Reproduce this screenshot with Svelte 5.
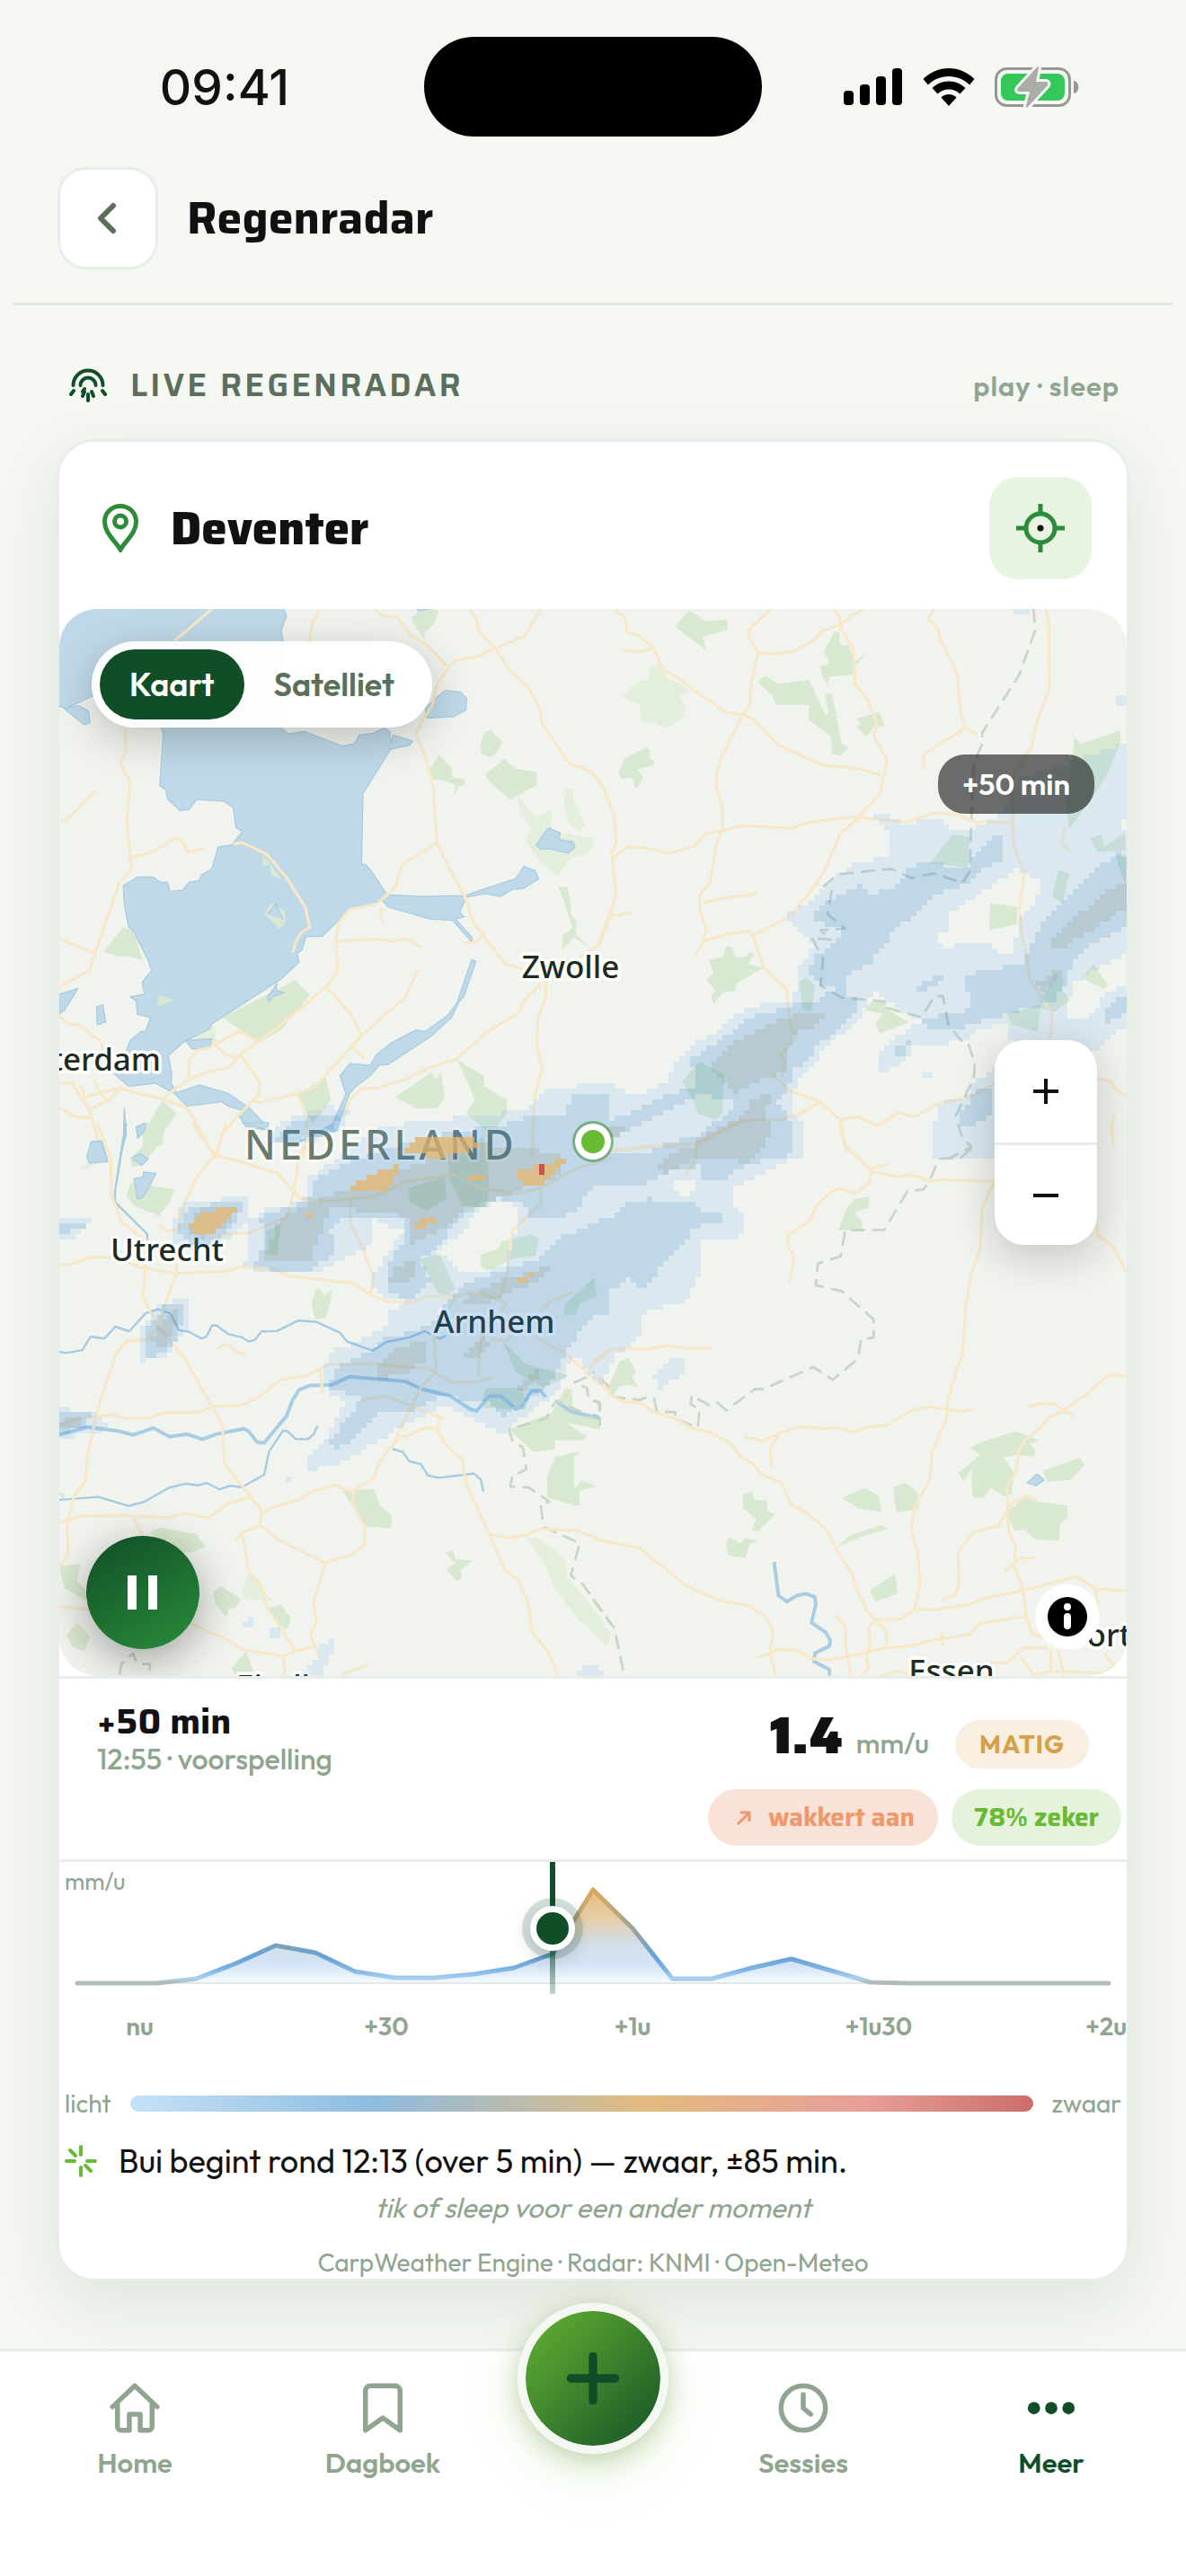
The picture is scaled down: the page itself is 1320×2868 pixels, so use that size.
<script lang="ts">
	type Tile = 'nw' | 'ne' | 'sw' | 'se';

	// Each map tile has its own drawing units: [x, y, scale x, scale y] on the 1188 unit map
	const tiles: Record<Tile, [number, number, number, number]> = {
		nw: [-6, -8, 0.3954, 0.3954],
		ne: [594, -8, 0.3954, 0.3954],
		sw: [-6, 572, 0.3954, 0.4018],
		se: [594, 572, 0.3954, 0.4018]
	};
	const tileTransform = (t: Tile) =>
		`translate(${tiles[t][0]} ${tiles[t][1]}) scale(${tiles[t][2]} ${tiles[t][3]})`;

	const water: Record<Tile, string> = {
		nw: 'M0 0H640L655 40 640 80 645 110 640 355 660 372 705 365 812 406 845 400 860 375 900 370 928 355 945 365 948 395 955 375 1010 392 1003 403 948 415 870 540 866 738 880 742 895 760 938 825 1040 830 1158 827 1222 805 1300 780 1323 745 1355 757 1365 780 1320 808 1290 810 1257 830 1215 822 1160 832 1142 875 1155 887 1130 893 1177 945 1176 957 1122 897 1058 893 942 860 925 842 832 867 755 942 710 943 698 980 685 990 690 1015 640 1062 443 1190 440 1202 365 1240 322 1278 332 1330 330 1355 345 1382 410 1360 435 1368 490 1384 550 1425 612 1490 540 1478 520 1445 532 1432 490 1420 468 1405 462 1410 375 1420 340 1385 287 1356 210 1364 170 1330 205 1260 215 1235 245 1210 258 1210 272 1170 235 1162 232 1125 215 1112 255 1105 248 1072 275 1038 265 1010 225 930 210 915 198 850 195 800 235 775 280 775 300 790 320 790 327 815 362 812 380 790 408 785 417 768 445 752 462 690 500 685 530 647 512 635 505 580 480 562 402 557 380 585 355 588 320 555 315 530 298 518 308 370 300 350 110 265 35 300 0 290zM30 302L68 292 97 307 102 340 85 346zM1045 300L1085 262 1100 250 1145 254 1162 272 1160 305 1125 323 1050 328zM1357 685L1392 637 1425 650 1422 670 1460 675 1467 690 1447 708 1395 695 1370 697zM1176 1008L1188 1012 1155 1110 1138 1130 1120 1170 1060 1225 940 1303 915 1305 890 1335 850 1365 832 1385 795 1490 690 1520 785 1470 822 1385 805 1335 833 1300 890 1305 908 1275 950 1242 1018 1206 1045 1210 1108 1165 1135 1128 1158 1060zM15 1105L68 1088 55 1110 30 1150 15 1160zM120 1140L138 1135 146 1183 122 1192zM370 1235L445 1230 440 1255 390 1260zM232 1478L255 1470 258 1490 235 1510zM105 1520L135 1518 150 1568H95zM198 1425L204 1500 185 1568 196 1500zM1022 20H1070L1038 57z',
		ne: '',
		sw: 'M105 52L130 50 152 108 100 112 92 95zM220 98L242 85 266 100 248 118zM225 155L250 150 252 137 287 140 270 175 250 207 235 212 230 180zM232 15L255 0 258 18 238 42zM530 0L600 20 605 0z',
		se: 'M1222 998L1250 973 1270 990 1247 1006z'
	};

	const rivers: Record<Tile, string> = {
		nw: '',
		ne: '',
		sw: 'M203 0L172 190 172 220 262 308 264 325M15 635L35 638 80 630 103 593 142 598 173 565 212 578 258 528 292 517 328 528 352 575 382 580 415 598 430 592 445 562 458 562 490 585 530 595 548 606 565 602 585 578 628 577 688 548 740 552 805 582 825 606 898 632 935 608 1000 595 1045 578 1085 598 1105 590M15 1045L125 1037 210 1062 255 1050 325 1011 370 1000 405 1005 430 998 466 1016 495 1006 530 1010 592 975 605 912 645 853 658 855 680 876 715 877 732 862 742 840M953 904L982 912 1000 938 1033 946 1053 977 1082 984 1182 972 1201 988 1209 1022',
		se: ''
	};

	const wideRivers: Record<Tile, string> = {
		nw: '',
		ne: '',
		sw: 'M15 865L95 843 180 854 222 865 280 846 325 870 375 863 418 877 460 862 535 848 548 855 572 885 592 887 655 812 672 768 690 740 720 728 780 727 832 704 990 717 1035 738 1115 757 1172 794 1190 799 1225 757 1260 758 1300 794 1318 787 1345 742 1370 743 1385 760M1418 775L1455 800 1535 818',
		se: 'M510 1217L522 1310 545 1327 575 1310 600 1305 625 1315 627 1335 615 1385 655 1412 668 1435 665 1450 625 1470 622 1493 665 1515 666 1532M0 810L18 818'
	};

	const woods: Record<Tile, string> = {
		nw: 'M1005 45L1025 30 1070 20 1085 25 1068 65 1045 85 1040 103 1015 65zM1200 405L1210 370 1230 360 1262 395 1250 420 1230 438 1203 428zM1060 470L1083 428 1120 470 1122 495 1157 500 1157 515 1140 520 1127 543 1130 515 1095 502 1065 500zM1213 488L1268 442 1300 470 1358 480 1360 515 1285 557 1240 520zM140 985L195 915 225 930 250 1010 205 997 180 998zM588 710L640 780 612 770 608 740 588 745zM475 1170L680 1065 720 1108 640 1205 580 1240 525 1205zM290 1142L297 1107 338 1122zM688 1385L765 1340 780 1400 745 1450 725 1470zM960 1395L1062 1325 1075 1345 1090 1325 1100 1395 1080 1425 1020 1425zM1135 1290L1210 1335 1212 1365 1275 1402 1275 1440 1230 1500 1160 1440 1185 1400zM1420 803L1445 803 1455 850 1455 880 1472 900 1468 935 1510 975 1465 945 1430 978 1432 940 1460 920 1440 855zM250 1500L305 1405 345 1440 310 1490 305 1530 250 1540zM592 880L610 850 650 870 650 910 635 920z',
		ne: 'M230 70L270 25 320 55 378 50 380 78 310 98 318 135 270 100zM650 140L680 83 693 88 695 120 720 125 735 170 768 145 750 170 730 185 730 205 665 212 660 235 645 210 640 182 665 175zM463 225L485 208 520 230 608 220 655 320 663 310 652 260 673 258 700 400 720 412 695 433 672 428 670 380 605 330 610 290 515 290 505 265zM740 330L805 310 823 350 795 350 768 380 742 350 755 345zM72 478L90 440 150 410 160 420 158 438 172 450 170 462 125 470 142 495 122 528 110 495 80 500zM325 1010L365 1000 375 970 390 972 400 1000 430 1000 440 985 455 995 435 1020 480 1030 405 1075 400 1095 365 1100 340 1135 332 1110 345 1095 320 1065 340 1045zM1352 420L1355 378 1370 400 1485 362 1485 395 1450 480 1410 545 1340 640 1330 560zM950 735L985 690 1010 655 1060 662 1055 750zM1118 850L1195 858 1192 908 1115 925zM1292 830L1310 755 1340 765 1322 850zM1400 665L1430 655 1440 690 1497 650 1500 700 1420 705zM580 1070L600 1058 625 1080 615 1155 590 1150zM765 1150L790 1120 822 1122 825 1145 888 1185 808 1215 795 1190 815 1160zM250 1350L300 1295 368 1330 365 1440 345 1460 295 1440 280 1400zM1375 1060L1410 1020 1450 1080 1440 1090zM1165 1160L1255 1135 1300 1045 1325 1060 1320 1095 1345 1120 1300 1155 1260 1145 1250 1210 1180 1190zM1470 715L1500 710V800z',
		sw: 'M255 0H300L305 50 245 120 220 122 215 100 250 65zM203 200L218 165 340 185 328 220 295 258 225 230zM598 300L640 280 628 368 598 365zM725 498L742 455 760 480 782 465 778 500 765 540 735 545zM1000 180L1100 150 1105 210 1050 245 1000 220zM1105 60L1210 40 1225 150 1220 235 1150 230 1115 160zM1030 378L1085 362 1130 460 1110 480 1080 470zM1200 395L1202 365 1250 350 1260 330 1345 310 1365 320 1355 370 1300 375 1220 410zM1440 500L1520 430 1530 480 1480 500 1470 530 1435 535zM1262 605L1300 640 1330 670 1450 700 1380 735 1300 690zM1200 790L1215 735 1320 735 1330 795zM1280 850L1330 830 1400 805 1440 735 1458 740 1460 800 1540 820 1535 850 1440 830 1500 870 1490 880 1410 880 1410 905 1350 912 1320 885zM1388 980L1412 925 1485 910 1465 925 1465 1015 1485 990 1528 1008 1480 1020 1480 1060 1465 1060 1388 1038zM812 1020L900 1015 918 1060 952 1090 948 1125 880 1118 845 1070zM1100 1190L1125 1185 1130 1210 1180 1212 1145 1240 1148 1262 1132 1270 1105 1238 1130 1220zM270 1135L300 1122 400 1140 428 1175 385 1190 330 1190zM448 1300L470 1285 528 1320 510 1345 492 1345 485 1370 455 1335zM600 1345L640 1335 668 1375 655 1405 620 1380zM35 1420L65 1385 103 1425 85 1465 50 1450zM500 1510L540 1465 568 1532H510zM15 1230L75 1222 65 1270 95 1300 90 1325 30 1290zM15 1025L32 1030 25 1045z',
		se: 'M38 745L75 660 100 652 122 690 110 705 128 735 98 725 70 735 58 755zM715 235L740 210 780 205 775 235 735 250 758 275 755 300 690 297zM422 1030L450 1022 455 1045 490 1045 490 1075 512 1085 465 1132 445 1130 460 1100 422 1065zM375 1165L385 1148 415 1165 430 1150 462 1158 440 1170 430 1205 380 1200zM700 1040L765 1012 805 1035 812 1078 750 1070zM845 1010L880 998 912 1022 918 1070 855 1080 848 1045zM688 1175L720 1145 810 1115 833 1125 760 1145zM780 1295L850 1250 858 1305 795 1328zM1062 900L1100 882 1190 855 1258 880 1230 890 1248 910 1240 925 1195 920 1155 928 1185 970 1178 1030 1155 1035 1120 1010 1100 1040 1068 1038 1065 960 1045 995 1028 970 1090 920zM1265 965L1370 928 1383 948 1345 990 1280 995zM1165 1080L1222 1030 1250 1050 1335 1060 1335 1095 1315 1110 1312 1158 1245 1155 1215 1128 1185 1130zM0 820L22 825 20 848 0 845z'
	};

	const heath: Record<Tile, string> = {
		nw: 'M1305 545L1355 605 1403 585 1400 645 1515 665 1520 685 1500 710 1455 720 1418 772 1370 735 1325 670 1345 640 1310 590zM1442 525L1462 530 1465 560 1495 630 1480 648 1450 625 1435 560zM380 1240L450 1195 460 1240 420 1240z',
		ne: 'M80 265L135 220 155 220 158 185 188 175 210 215 245 230 272 250 245 265 262 300 250 330 210 355 165 340 135 340 130 290z',
		sw: 'M68 135L92 108 130 112zM528 1300L545 1250 580 1265 590 1300 620 1325 540 1320zM1330 1150L1365 1150 1440 1210 1445 1260 1480 1300 1550 1385 1560 1450 1470 1370 1410 1290 1380 1220z',
		se: 'M0 1375L40 1400 50 1420 38 1450 0 1415z'
	};

	const roads: Record<Tile, string> = {
		nw: 'M340 110L445 20M748 20L728 60 715 130M903 20L925 40 965 42 1005 95 1050 122 1110 185 1080 230 1065 290 1018 370 1045 435 1068 520 1078 680 1130 785 1155 825 1180 902 1270 1020 1320 1035M1170 20L1190 50 1195 80 1243 130 1280 190 1335 240 1370 308 1372 340 1450 455 1510 478 1535 500 1568 580M1370 20L1325 97 1243 130 1190 155 1130 165 1110 185M200 355L203 420 187 455 215 508 205 615 218 755 185 790 115 990 100 1038 15 1085M120 532L98 550 45 608 20 618M220 718L265 710 345 665 362 675 378 707 425 693M505 682L530 678 598 710 650 770 708 860 720 917 695 932 680 960 672 988M15 948L115 990M1080 678L980 740 960 805 910 850 832 867 800 905 795 940 798 1040 765 1085 640 1190 525 1275M800 955L910 950 960 955 990 948 1035 973M918 860L925 900M765 1085L800 1120 835 1160 865 1222 840 1255 875 1285M1025 1035L988 1115 865 1222 733 1368 685 1385 580 1410 560 1405M1155 960H1180L1210 940M1568 870L1530 970 1480 1000M1385 1070L1385 1115 1362 1170 1360 1260 1375 1310 1352 1400 1345 1568M1370 1075L1325 1120 1310 1155 1215 1215 1130 1290 1060 1310 990 1345 910 1370 865 1370 835 1400 815 1450M15 1165L40 1190 65 1190 130 1235 170 1330M525 1275L580 1355 575 1390 515 1450 475 1500 455 1568M525 1275L495 1310 430 1325 380 1345 305 1400 180 1370 70 1400M380 1345V1290L405 1262 440 1255 520 1210 580 1240M445 1235L480 1275 515 1285M15 1355H50L100 1430 140 1568M75 1360L90 1400M110 1345L150 1410M100 1430L160 1400 190 1365M15 1425L60 1450 110 1455M305 1400L375 1425 430 1520 455 1568M685 1385L705 1430 715 1500 700 1568',
		ne: 'M60 20L90 45 97 88 125 92 170 130 195 190 240 215 270 240 345 290 365 308 420 318 450 330 520 402 590 435 648 460 748 470 810 488M80 137L135 140 170 130M500 20L440 78 438 100 465 142 445 230 442 290 420 320 360 440 347 490 348 525 365 585 365 640 345 690 330 790 300 825V865L318 920 310 960 285 998M465 142L500 147 565 140 625 105 640 85 700 62 730 38 765 20M678 20L693 40 700 80 732 130 738 232 775 278 800 350 790 375 827 445 808 540 745 610 695 655 655 750 625 800 555 885 450 940 480 1030 545 1090 555 1190 570 1225 530 1275 540 1300 530 1340M0 485L30 525 60 600 65 680 52 705 65 820 50 885 15 970M52 725L95 690 150 693 210 708 280 690 320 652 365 645 420 630 560 638 610 620 740 605 880 620 960 595 1030 600 1075 620 1185 622M50 885L115 873M310 848L375 833 450 825 460 818M310 955L380 935 440 928 450 940M960 20L943 50 968 70 980 110 1025 200 1035 315 1048 355 930 430V468M1048 355L1082 373M1275 20L1283 60 1285 245 1247 345 1235 405 1185 490 1180 570 1185 690 1215 765 1200 860 1205 930 1220 990 1230 1065 1290 1155 1292 1195 1283 1235M1330 635L1318 680 1343 705M505 1330L550 1375 640 1408 695 1458 710 1530 745 1568M290 1525L420 1460 530 1458 585 1440 640 1408M695 1458L745 1450 800 1475 860 1438 905 1450 975 1412 1060 1395 1130 1358M0 1552L130 1535 290 1525V1565M1420 1343L1455 1350 1475 1375 1502 1392M1467 1437L1460 1480 1465 1532M1130 1355L1180 1350',
		sw: 'M122 0L160 100 162 200 190 275 250 320 258 400 250 480 290 560 370 655 475 840 480 945 585 1075 580 1115 630 1155 765 1220 730 1330 740 1385 720 1415 745 1475M295 285L325 300 350 295 365 230 405 145 455 90 415 40 390 0M485 0L455 90 525 108 630 140 675 192 695 210 770 218 905 203 985 165 1125 143 1200 180 1305 198 1370 180 1475 125 1568 100M675 192L690 100 705 60M675 192L655 260 610 280 550 305 480 310 440 325M835 215V280L870 350 900 425 890 475 935 495 1010 498 1050 480 1130 480 1190 468 1275 500M1370 180L1372 225 1290 300 1275 420 1255 490M15 393H50L100 373 170 373 240 400 345 418 480 412 530 400 620 405 660 425 845 445 890 475M345 390L345 420 310 510 295 560 265 600 205 605 175 640 125 790 95 920 90 990 55 1040 38 1110 40 1195 15 1235M15 835L70 820 165 808 200 820 270 818 310 803 405 803 445 787 525 783 570 765 640 712 715 700 770 670 895 668 1055 682 1120 720 1185 718 1235 705M750 685L757 755M458 625L485 613 525 640 540 640M1135 475L1070 580 1075 690 1035 730 1010 780 970 855 965 880 915 940 900 985 840 1020 790 1005 730 1020 690 1045 605 1068 585 1085M860 770L935 758 1010 785 1095 820M1085 820L1078 850 1105 895 1150 935 1160 1000 1225 1140 1270 1240 1305 1265 1335 1330 1345 1410 1390 1465 1420 1532M968 868L990 870 1045 845 1078 850M15 1110L70 1090 200 1088 320 1095 370 1082 435 1095 490 1055 555 1038M225 1095L250 1145M585 1115L530 1135 510 1160M530 1140L548 1240 590 1295 595 1335 680 1465 735 1450 745 1475M845 1020L840 1055 875 1120 875 1170 840 1195 765 1220M380 1385L480 1430 540 1462 645 1478 680 1465M645 1478L650 1532M810 1530L885 1500M1225 1140L1275 1150 1330 1142 1370 1125 1470 1130 1568 1165M1275 500L1200 610 1195 700M1355 595L1440 640 1568 750M1505 680L1568 630M1460 470L1400 495 1365 520M1230 600L1270 605 1290 590M15 1340L100 1350',
		se: 'M0 85L160 68 290 60 410 0M290 60V100L258 145M695 0L710 70 750 100 785 135 860 150 895 143 950 163 985 158 1130 162 1095 240 1090 350 1065 420 1048 520 1040 640 1022 690 1000 765 995 820 955 910 948 990 905 1065 895 1125 915 1200 920 1285 905 1345M785 130L800 120 830 115M785 135L775 170 740 195 690 182 665 195 630 230 608 275 550 310 547 335 567 373 555 440M1420 280V310L1470 350 1480 375 1502 415M0 660L45 630 90 625 150 628 210 617 260 625 335 625M15 705L50 755 85 772 138 778 170 800 230 820 280 847 330 858 390 890 415 925 450 945 475 975 530 998 560 1060 600 1080 655 1125 690 1190 730 1250 740 1290 770 1350 795 1378M425 870L480 882 525 860 585 842 640 848 690 845 735 857 765 845 830 838 895 797 945 787 1040 800 1073 793M525 860L498 905 503 955M1225 788L1260 778 1300 780 1325 797 1355 815M1502 702L1455 697 1385 755 1325 797 1280 820 1255 850 1215 880 1198 910 1190 975 1165 1005 1167 1075 1140 1118 1075 1132 1028 1187 1030 1280 1020 1307 982 1323M1165 1075L1185 1050 1220 1038 1250 1043M1165 1080L1172 1135 1190 1175 1185 1230 1208 1280 1220 1370 1235 1415 1290 1435M1158 1245L1200 1208 1245 1205M0 1153L130 1178 265 1285 360 1325 435 1337 485 1367 508 1412 497 1470 515 1532M465 1483L520 1460 575 1462 610 1485 670 1488 760 1470 820 1455 895 1450 940 1437 1060 1418 1085 1388 1220 1367M682 1365L708 1395 712 1450 725 1532M795 1378L775 1400 782 1440 770 1480 775 1510 755 1532M795 1378L825 1410 828 1445M795 1378L870 1375 905 1345 950 1350 1060 1335 1100 1318 1240 1290 1360 1257 1415 1292 1502 1297M1415 1292L1425 1370M980 1412L985 1450M810 1532L855 1520 900 1532M1120 1497L1165 1497 1210 1455 1280 1455M1205 1480L1240 1530 1290 1520 1288 1460M1310 1460L1325 1532M1440 1470L1465 1505 1440 1525 1300 1520'
	};

	const borders: Record<Tile, string> = {
		nw: '',
		ne: 'M1240 20L1245 80 1200 205 1095 370 1098 395 1078 440 1070 480 1060 760 1040 792 960 765 895 778 840 752 690 767 650 800 672 815 660 880 710 920 640 925 670 952 615 945 648 1005 640 1080 700 1115 820 1125 815 1140 925 1170 960 1112 985 1110 1000 1190 1040 1240 1055 1240 1075 1300 1072 1340 1020 1450 1040 1510 1065 1535 1000 1568',
		sw: 'M1568 735L1525 700M1500 705L1465 720 1500 735 1505 760 1538 780 1535 825 1415 770 1400 790 1385 820 1280 850 1290 880 1320 900 1330 960 1290 980 1285 1008 1335 1010 1395 1050 1370 1055 1378 1120 1480 1165 1455 1255 1490 1280 1568 1390M185 1530L190 1500 222 1470 235 1500 270 1500 270 1520',
		se: 'M1065 72L1035 97 975 100 945 165 930 185 885 190 820 297 710 298 697 370 633 390 627 450 700 467 790 545 790 595 755 600 745 655 675 712 620 677 480 738 455 738 375 797 350 775 325 782 278 755 275 780 300 795 295 845 230 820 232 802 180 800 172 765 150 762 130 768 60 760 0 690M0 770L18 775 20 840M0 1320L60 1400 88 1532'
	};

	// Radar cells per intensity: 0 dry, 1 light, 2 moderate, 3 firm, 4 heavy, 5 extreme.
	// Later shapes overwrite earlier ones.
	const rain: [number, Tile, string][] = [
		[1, 'nw', '1568,1355 1480,1370 1400,1370 1350,1400 1330,1430 1250,1440 1130,1450 1080,1490 990,1500 900,1568 1568,1568'],
		[1, 'nw', '600,1500 650,1460 770,1420 830,1440 800,1490 700,1530'],
		[1, 'ne', '-50,1355 50,1350 110,1395 215,1350 220,1320 245,1280 300,1235 365,1200 400,1160 465,1135 560,1135 580,1060 570,1040 600,1000 620,960 590,935 555,905 540,880 600,850 650,800 700,760 740,735 835,715 840,670 825,630 790,605 790,590 830,600 870,625 980,610 1010,640 1060,640 1150,600 1160,570 1200,500 1290,470 1400,430 1510,395 1510,610 1470,630 1510,650 1510,990 1440,1020 1400,1040 1350,1080 1330,1160 1350,1180 1390,1180 1420,1140 1440,1100 1510,1080 1510,1190 1450,1230 1420,1265 1200,1280 1175,1230 1170,1190 1100,1200 1050,1230 980,1245 900,1245 890,1280 830,1325 800,1315 805,1270 850,1230 890,1205 920,1180 880,1160 820,1120 800,1100 770,1130 760,1160 720,1200 660,1250 590,1340 555,1380 555,1430 595,1470 585,1568 -50,1568'],
		[1, 'ne', '955,1568 955,1480 980,1410 1040,1400 1080,1350 1130,1310 1200,1310 1200,1568'],
		[1, 'ne', '1465,265 1510,260 1510,305 1465,290'],
		[1, 'ne', '1190,15 1225,15 1225,36 1190,30'],
		[1, 'ne', '930,1320 960,1325 960,1340 930,1340'],
		[1, 'se', '-50,0 595,0 595,50 560,100 480,140 440,160 400,180 395,220 430,270 430,300 400,330 300,325 305,400 285,450 265,495 220,500 140,530 140,590 70,640 40,700 20,730 -50,640'],
		[1, 'se', '170,695 210,655 260,655 250,695 190,740 175,720'],
		[1, 'se', '955,0 1130,0 1130,70 1000,80 955,85'],
		[1, 'se', '-30,1510 20,1510 40,1540 -30,1540'],
		[1, 'sw', '1568,600 1500,620 1450,660 1440,690 1420,740 1330,810 1260,860 1200,830 1130,795 1080,790 1000,830 920,880 850,920 790,950 710,965 720,920 760,880 790,830 820,780 770,740 750,680 790,630 850,610 930,570 950,520 1000,490 920,480 890,440 900,420 950,350 980,300 900,270 900,330 860,355 820,380 720,420 620,420 530,400 550,360 550,270 600,240 700,220 720,150 800,100 850,60 900,20 1000,0 1568,0'],
		[1, 'sw', '600,50 640,0 810,0 750,40 650,60'],
		[1, 'sw', '340,260 370,220 545,205 540,270 500,320 400,350 340,340'],
		[1, 'sw', '0,270 115,265 60,320 0,325'],
		[1, 'sw', '0,790 105,800 160,850 60,870 0,890'],
		[1, 'sw', '250,560 300,500 385,490 380,560 340,610 330,640 250,660'],
		[1, 'sw', '690,1540 740,1490 745,1440 785,1435 780,1490 740,1540'],
		[1, 'sw', '600,1405 640,1400 635,1432 600,1432'],
		[1, 'sw', '535,1380 565,1365 560,1400 538,1405'],
		[1, 'sw', '1455,1540 1490,1510 1530,1515 1530,1540'],
		[1, 'sw', '655,975 675,975 675,990 655,990'],
		[0, 'ne', '1000,880 1080,830 1190,755 1265,790 1240,850 1200,900 1190,960 1180,1000 1150,990 1120,960 1050,960 980,975 975,935 1000,925'],
		[0, 'se', '230,155 280,160 285,185 260,205 235,190'],
		[0, 'sw', '1080,360 1150,300 1200,240 1240,215 1300,230 1310,290 1290,330 1270,400 1210,410 1150,415 1120,390'],
		[2, 'nw', '1568,1385 1480,1400 1440,1430 1450,1450 1330,1450 1250,1480 1120,1490 1000,1540 1000,1568 1330,1568 1400,1530 1480,1500 1568,1480'],
		[2, 'nw', '620,1510 670,1460 800,1440 790,1490 650,1530'],
		[2, 'ne', '-60,1385 50,1385 20,1430 -60,1450'],
		[2, 'ne', '270,1290 330,1250 390,1210 430,1170 520,1150 580,1130 640,1120 680,1090 640,1075 610,1040 620,1000 650,990 690,950 700,920 630,900 620,880 680,830 750,800 780,820 850,810 890,750 930,725 1000,745 1060,750 1080,700 1130,665 1155,665 1155,720 1100,755 1060,790 1000,810 940,840 910,880 850,920 810,980 780,1020 740,1040 710,1060 710,1120 740,1120 735,1160 700,1200 640,1240 600,1300 560,1320 550,1370 510,1410 550,1450 565,1500 550,1568 100,1568 200,1530 300,1500 380,1440 400,1400 300,1390 200,1440 100,1490 0,1520 0,1480 100,1440 200,1390 280,1370 290,1320'],
		[2, 'ne', '1050,1060 1090,1040 1210,1020 1220,990 1245,940 1265,900 1310,860 1360,810 1430,740 1480,710 1510,720 1510,910 1440,950 1380,980 1350,1020 1330,1080 1290,1130 1200,1150 1100,1180 1030,1205 940,1200 930,1175 1050,1150 1070,1110 1045,1095'],
		[2, 'ne', '910,1080 980,1050 980,1070 920,1100'],
		[2, 'ne', '840,1250 890,1240 880,1275 850,1280'],
		[2, 'ne', '1435,1160 1480,1110 1510,1105 1510,1150 1450,1185'],
		[2, 'ne', '1030,1440 1080,1380 1130,1360 1130,1440 1080,1470 1030,1480'],
		[2, 'se', '-50,110 60,90 180,90 200,60 280,40 400,0 560,0 560,40 500,80 470,110 400,130 370,165 310,160 300,120 200,140 130,175 -50,175'],
		[2, 'se', '-50,300 50,260 80,230 150,210 280,220 290,240 365,250 360,275 280,290 270,320 200,380 170,440 140,465 100,430 20,490 0,550 -50,570'],
		[2, 'sw', '560,390 600,330 580,260 640,240 720,210 740,150 830,110 950,70 1000,50 1200,20 1340,20 1450,40 1568,80 1568,160 1500,190 1480,240 1440,260 1350,270 1310,215 1240,210 1180,240 1120,290 1080,350 1030,380 1060,440 1000,490 940,470 940,400 980,330 985,260 900,260 820,260 780,300 790,360 720,410 620,410'],
		[2, 'sw', '780,720 790,680 880,640 930,600 1010,580 1060,560 1120,480 1150,450 1260,410 1380,370 1430,310 1568,290 1568,520 1500,550 1440,640 1400,720 1330,770 1260,820 1230,770 1150,770 1100,750 1000,800 920,800 850,870 790,910 780,880 830,810 870,760 780,740'],
		[2, 'sw', '350,300 380,230 530,220 520,270 460,320 400,345'],
		[2, 'sw', '0,280 95,285 40,305 0,305'],
		[2, 'sw', '0,795 100,800 95,840 0,870'],
		[2, 'sw', '265,560 310,510 370,505 345,600 310,640 250,650'],
		[3, 'ne', '340,1290 400,1240 470,1200 560,1165 650,1155 640,1190 570,1215 550,1260 540,1320 470,1350 400,1385 370,1350 340,1320'],
		[3, 'ne', '450,1400 510,1370 490,1420 495,1500 450,1568 250,1568 300,1510 420,1450'],
		[3, 'ne', '1300,940 1380,870 1440,820 1510,785 1510,860 1440,900 1380,940 1330,970 1290,970'],
		[3, 'ne', '1245,1080 1300,1035 1320,1050 1270,1100'],
		[3, 'ne', '20,1490 60,1472 100,1470 90,1490 50,1515'],
		[3, 'se', '390,20 500,0 490,50 430,120 390,100 370,60'],
		[3, 'se', '170,130 220,90 290,60 360,50 300,90 200,140'],
		[3, 'sw', '590,380 640,260 720,220 850,180 1000,120 1200,60 1400,80 1450,100 1400,160 1330,180 1230,220 1150,240 1100,290 1000,340 1010,260 900,250 780,230 740,330 720,390'],
		[3, 'sw', '910,670 960,620 1050,610 1055,650 1000,690 910,710'],
		[3, 'sw', '1140,500 1240,440 1330,420 1410,380 1380,430 1260,480 1200,510'],
		[3, 'sw', '940,440 960,400 1010,380 1020,410 980,450'],
		[3, 'sw', '1160,640 1210,580 1225,610 1200,650 1160,655'],
		[3, 'sw', '1295,740 1360,680 1370,705 1330,745'],
		[3, 'sw', '375,290 410,240 520,230 490,280 440,315 390,320'],
		[3, 'sw', '0,830 80,810 70,840 0,860'],
		[3, 'sw', '275,610 300,560 340,515 345,550 310,620'],
		[4, 'sw', '375,290 420,245 515,235 500,260 460,300 400,310'],
		[4, 'sw', '830,180 880,150 965,120 965,145 940,185 850,190'],
		[4, 'sw', '990,80 1020,45 1080,40 1200,48 1200,70 1120,90 1060,105 1050,85'],
		[4, 'sw', '1160,165 1165,140 1210,145 1205,165'],
		[4, 'sw', '1310,130 1445,100 1440,115 1370,175 1310,165'],
		[4, 'sw', '1015,285 1050,258 1080,262 1050,290'],
		[4, 'sw', '1295,438 1345,418 1342,432 1310,446'],
		[4, 'sw', '708,243 725,243 725,259 708,259'],
		[5, 'sw', '1362,120 1378,120 1378,148 1362,148']
	];

	const CELL = 6;
	const GRID = 198;

	function rasterize() {
		const cells = new Uint8Array(GRID * GRID);
		for (const [level, tile, outline] of rain) {
			const [tx, ty, sx, sy] = tiles[tile];
			const pts = outline.split(' ').map((p) => {
				const [x, y] = p.split(',').map(Number);
				return [tx + x * sx, ty + y * sy];
			});
			for (let row = 0; row < GRID; row++) {
				const y = (row + 0.5) * CELL;
				const hits: number[] = [];
				pts.forEach(([x1, y1], i) => {
					const [x2, y2] = pts[(i + 1) % pts.length];
					if (y1 > y !== y2 > y) hits.push(x1 + ((y - y1) / (y2 - y1)) * (x2 - x1));
				});
				hits.sort((a, b) => a - b);
				for (let i = 0; i + 1 < hits.length; i += 2) {
					const from = Math.max(0, Math.round(hits[i] / CELL));
					const to = Math.min(GRID, Math.round(hits[i + 1] / CELL));
					for (let col = from; col < to; col++) cells[row * GRID + col] = level;
				}
			}
		}

		const paths = ['', '', '', '', '', ''];
		for (let row = 0; row < GRID; row++) {
			let start = 0;
			for (let col = 1; col <= GRID; col++) {
				const level = cells[row * GRID + start];
				if (col < GRID && cells[row * GRID + col] === level) continue;
				if (level) {
					const w = (col - start) * CELL;
					paths[level] += `M${start * CELL} ${row * CELL}h${w}v${CELL}h${-w}z`;
				}
				start = col;
			}
		}
		return paths;
	}

	const radar = rasterize();
	const tileNames = Object.keys(tiles) as Tile[];

	const cities = [
		{ name: 'Zwolle', x: 569, y: 411, anchor: 'middle' },
		{ name: 'Amsterdam', x: 113, y: 514, anchor: 'end' },
		{ name: 'Utrecht', x: 120, y: 726, anchor: 'middle' },
		{ name: 'Arnhem', x: 484, y: 806, anchor: 'middle' },
		{ name: 'Essen', x: 993, y: 1195, anchor: 'middle' },
		{ name: 'Eindhoven', x: 197, y: 1212, anchor: 'start' },
		{ name: 'Dortmund', x: 1118, y: 1155, anchor: 'start' }
	];

	// Height of the rain graph above the baseline, one value per step
	const series = [0, 0, 0, 5, 22, 42, 34, 13, 6, 6, 10, 17, 33, 104, 61, 5, 5, 17, 27, 14, 1, 0, 0, 0, 0, 0, 0];
	const points = series.map((v, i) => `${20 + (i * 1148) / 26},${135 - v}`).join(' ');

	let layer = $state('kaart');
	const axis = ['nu', '+30', '+1u', '+1u30', '+2u'];
</script>

{#snippet home()}
	<path d="M3 11.5L12 3l9 8.500M5 9.800V19.500a1.500 1.500 0 0 0 1.500 1.500H9.800v-6.500h4.400V21h3.300a1.500 1.500 0 0 0 1.500-1.500V9.800" />
{/snippet}
{#snippet bookmark()}
	<path d="M5 5a2 2 0 0 1 2-2h10a2 2 0 0 1 2 2v16l-7-5-7 5z" />
{/snippet}
{#snippet clock()}
	<circle cx="12" cy="12" r="9" /><path d="M12 6.500V12l3 2.500" />
{/snippet}
{#snippet dots()}
	<g fill="currentColor" stroke="none"><circle cx="5" cy="12" r="2.500" /><circle cx="12" cy="12" r="2.500" /><circle cx="19" cy="12" r="2.500" /></g>
{/snippet}
{#snippet tab(label, icon, active)}
	<a href="#{label.toLowerCase()}" class="tab" class:active aria-current={active ? 'page' : undefined}>
		<svg viewBox="0 0 24 24" aria-hidden="true">{@render icon()}</svg>
		<span>{label}</span>
	</a>
{/snippet}

<div class="app">
	<div class="status">
		<span class="time">09:41</span>
		<div class="island"></div>
		<div class="indicators">
			<svg width="66" height="42" viewBox="0 0 66 42" aria-hidden="true">
				<rect y="25" width="11" height="16" rx="4" /><rect x="18" y="18" width="11" height="23" rx="4" />
				<rect x="36" y="9" width="11" height="32" rx="4" /><rect x="54" width="11" height="41" rx="4" />
			</svg>
			<svg width="58" height="42" viewBox="0 0 58 42" aria-hidden="true">
				<path d="M29 0C40 0 50 4.500 57.500 12L52 18.500C46 12.500 38 9 29 9S12 12.500 6 18.500L.500 12C8 4.500 18 0 29 0z" />
				<path d="M29 14.500c7.500 0 14 3 18.500 7.500L41.500 28.500C38.500 25.500 34 23.500 29 23.500s-9.500 2-12.500 5L10.500 22C15 17.500 21.500 14.500 29 14.500z" />
				<path d="M29 29c3.500 0 6.500 1.300 8.500 3.500L29 42l-8.500-9.500C22.500 30.300 25.500 29 29 29z" />
			</svg>
			<svg width="94" height="46" viewBox="0 0 94 46" aria-hidden="true">
				<rect x="1.500" y="2.500" width="82" height="41" rx="12" fill="none" stroke="#969696" stroke-width="3" />
				<path d="M88 16c7 1 7 13 0 14z" fill="#969696" />
				<rect x="7" y="8" width="71" height="30" rx="8" fill="#34c85a" />
				<path d="M47 1L26 24c-2 3 0 4 2 4h11l-4 16c0 2 1 2 2 1l22-24c1-2 0-4-2-4H46l3-15c0-2-1-2-2-1z" fill="#aaaca8" stroke="#f5f7f2" stroke-width="6" paint-order="stroke" stroke-linejoin="round" />
			</svg>
		</div>
	</div>

	<header class="header">
		<button class="back" aria-label="Terug">
			<svg viewBox="0 0 24 24" aria-hidden="true"><path d="M15 5l-7 7 7 7" /></svg>
		</button>
		<h1>Regenradar</h1>
	</header>

	<main>
		<div class="section-title">
			<svg width="42" height="38" viewBox="0 0 42 38" aria-hidden="true">
				<path d="M4.500 19a16.500 16.500 0 0 1 33 0M12.500 19a8.500 8.500 0 0 1 17 0M5 25l-3 4M37 25l3 4M15 26l2-3M15 31l2-5M27 31l-2-5M21 29v7" />
			</svg>
			<h2>LIVE REGENRADAR</h2>
			<span class="hint">play · sleep</span>
		</div>

		<section class="card">
			<div class="place">
				<svg class="pin" viewBox="0 0 40 54" aria-hidden="true">
					<path d="M20 2.500c10 0 17.500 7.500 17.500 17.500 0 13-12 21-17.500 31C14.500 41 2.500 33 2.500 20 2.500 10 10 2.500 20 2.500z" /><circle cx="20" cy="19.500" r="6.500" />
				</svg>
				<h3>Deventer</h3>
				<button class="locate" aria-label="Mijn locatie">
					<svg viewBox="0 0 56 56" aria-hidden="true">
						<circle cx="28" cy="28" r="16" /><path d="M28 1v11M28 44v11M1 28h11M44 28h11" /><circle class="core" cx="28" cy="28" r="3.500" />
					</svg>
				</button>
			</div>

			<div class="map">
				<svg class="canvas" viewBox="0 0 1188 1188" role="img" aria-label="Regenkaart rond Deventer">
					<rect width="1188" height="1188" fill="#f1f4ee" />
					{#each tileNames as t}
						<g transform={tileTransform(t)} fill="none" stroke-linejoin="round">
							<path d={heath[t]} fill="#e4eedd" />
							{#if t !== 'nw'}<path d={woods[t]} fill="#d9e8d0" />{/if}
							<path d={water[t]} fill="#c0d9e8" stroke="#a6cbe0" stroke-width="3" />
							{#if t === 'nw'}<path d={woods[t]} fill="#d9e8d0" /><path d="M600 1115L628 1075 625 1095 648 1100 620 1110 605 1125zM600 880L625 850 645 895" fill="#c0d9e8" stroke="#a6cbe0" stroke-width="3" />{/if}
							<path d={rivers[t]} stroke="#a6cbe0" stroke-width="6" />
							<path d={wideRivers[t]} stroke="#a9cde3" stroke-width="10" />
							<path d={borders[t]} stroke="#c9d5c7" stroke-width="7" stroke-dasharray="40 20" />
							<path d={roads[t]} stroke="#f6e8c8" stroke-width="8" />
						</g>
					{/each}
					<text class="country" x="206" y="613">NEDERLAND</text>
					{#each cities as c}
						<text class="city" x={c.x} y={c.y} text-anchor={c.anchor}>{c.name}</text>
					{/each}
					<g shape-rendering="crispEdges">
						<path d={radar[1]} fill="#5eaaff" fill-opacity="0.150" />
						<path d={radar[2]} fill="#2d80ce" fill-opacity="0.250" />
						<path d={radar[3]} fill="#4b7c9b" fill-opacity="0.350" />
						<path d={radar[4]} fill="#d7af6f" fill-opacity="0.800" />
						<path d={radar[5]} fill="#c9544e" />
					</g>
					<circle cx="594" cy="593" r="23" fill="#3a8a33" opacity="0.550" />
					<circle cx="594" cy="593" r="20" fill="#fff" />
					<circle cx="594" cy="593" r="13" fill="#67bb32" />
				</svg>

				<div class="layers">
					<button class:on={layer === 'kaart'} onclick={() => (layer = 'kaart')}>Kaart</button>
					<button class:on={layer === 'satelliet'} onclick={() => (layer = 'satelliet')}>Satelliet</button>
				</div>
				<div class="offset">+50 min</div>
				<div class="zoom">
					<button aria-label="Inzoomen"><svg viewBox="0 0 28 28" aria-hidden="true"><path d="M0 14h28M14 0v28" /></svg></button>
					<button aria-label="Uitzoomen"><svg viewBox="0 0 28 28" aria-hidden="true"><path d="M0 14h28" /></svg></button>
				</div>
				<button class="pause" aria-label="Pauzeren">
					<svg viewBox="0 0 34 38" aria-hidden="true"><path d="M0 0h10v38H0zM23 0h10v38H23z" /></svg>
				</button>
				<button class="info" aria-label="Bronvermelding">
					<svg viewBox="0 0 44 44" aria-hidden="true"><circle cx="22" cy="22" r="22" /><circle cx="22" cy="11" r="4" fill="#fff" /><rect x="18" y="18" width="8" height="18" rx="4" fill="#fff" /></svg>
				</button>
			</div>

			<div class="reading">
				<div class="moment">
					<strong>+50 min</strong>
					<span>12:55 · voorspelling</span>
				</div>
				<div class="values">
					<div class="amount">
						<strong>1.4</strong>
						<span>mm/u</span>
						<em class="pill level">MATIG</em>
					</div>
					<div class="pills">
						<span class="pill trend">
							<svg viewBox="0 0 18 18" aria-hidden="true"><path d="M2 16L15 3M5 3h10v10" /></svg>
							wakkert aan
						</span>
						<span class="pill sure">78% zeker</span>
					</div>
				</div>
			</div>

			<div class="chart">
				<svg viewBox="0 0 1188 147" role="img" aria-label="Neerslagverloop">
					<defs>
						<linearGradient id="fill" gradientUnits="userSpaceOnUse" x1="0" y1="31" x2="0" y2="135">
							<stop offset="0" stop-color="#e0ae5e" stop-opacity="0.850" />
							<stop offset="0.300" stop-color="#dfbe8a" stop-opacity="0.750" />
							<stop offset="0.600" stop-color="#aec5d8" stop-opacity="0.550" />
							<stop offset="0.800" stop-color="#a8c9ec" stop-opacity="0.500" />
							<stop offset="1" stop-color="#a8cbf0" stop-opacity="0.100" />
						</linearGradient>
						<linearGradient id="line" gradientUnits="userSpaceOnUse" x1="0" y1="31" x2="0" y2="135">
							<stop offset="0" stop-color="#d9a85c" />
							<stop offset="0.200" stop-color="#c2a671" />
							<stop offset="0.420" stop-color="#99a79f" />
							<stop offset="0.600" stop-color="#7aa3bd" />
							<stop offset="0.720" stop-color="#66a2d6" />
							<stop offset="0.850" stop-color="#7db3e2" />
							<stop offset="0.950" stop-color="#a8d0f3" />
							<stop offset="0.990" stop-color="#b0bab6" />
						</linearGradient>
					</defs>
					<path d="M20 135H1168" stroke="#e3ebe6" stroke-width="2" />
					<polygon points="20,135 {points} 1168,135" fill="url(#fill)" />
					<polyline points={points} fill="none" stroke="url(#line)" stroke-width="5" stroke-linejoin="round" stroke-linecap="round" />
				</svg>
				<span class="unit">mm/u</span>
				<div class="cursor"><i></i></div>
			</div>
			<div class="axis">
				{#each axis as label}<span>{label}</span>{/each}
			</div>
			<div class="legend"><span>licht</span><div class="scale"></div><span>zwaar</span></div>
			<p class="forecast">
				<svg viewBox="0 0 36 36" aria-hidden="true"><path d="M18 2v9M18 25v9M2 18h9M25 18h9M6 6l6 6M23 23l6 6" /></svg>
				Bui begint rond 12:13 (over 5 min) — zwaar, ±85 min.
			</p>
			<p class="tip">tik of sleep voor een ander moment</p>
			<p class="source">CarpWeather Engine · Radar: KNMI · Open-Meteo</p>
		</section>
	</main>

	<nav>
		{@render tab('Home', home, false)}
		{@render tab('Dagboek', bookmark, false)}
		<button class="fab" aria-label="Toevoegen">
			<svg viewBox="0 0 56 56" aria-hidden="true"><path d="M28 4v48M4 28h48" /></svg>
		</button>
		{@render tab('Sessies', clock, false)}
		{@render tab('Meer', dots, true)}
	</nav>
</div>

<style>
	:global(body) {
		margin: 0;
		background: #f5f7f2;
	}

	.app {
		display: flex;
		flex-direction: column;
		min-height: 100vh;
		overflow: hidden;
		background: #f5f7f2;
		color: #111;
		font-family: Outfit, Lato, sans-serif;
	}

	.app :is(h1, h2, h3, p) {
		margin: 0;
	}

	button {
		display: grid;
		place-items: center;
		padding: 0;
		border: 0;
		font: inherit;
		cursor: pointer;
	}

	svg {
		display: block;
	}

	.status {
		display: grid;
		grid-template-columns: 1fr 376px 1fr;
		align-items: center;
		padding: 41px 0 34px;
	}

	.time {
		padding-left: 28px;
		font: 500 55px/60px Inter, sans-serif;
		text-align: center;
	}

	.island {
		height: 111px;
		border-radius: 56px;
		background: #000;
	}

	.indicators {
		display: flex;
		align-items: center;
		justify-content: center;
		gap: 22px;
		padding-right: 28px;
	}

	.header {
		display: flex;
		align-items: center;
		gap: 32px;
		margin: 0 15px;
		padding: 0 50px 37px 49px;
		border-bottom: 3px solid #dfe8e0;
	}

	.back {
		width: 112px;
		height: 114px;
		border: 3px solid #e7eee9;
		border-radius: 32px;
		background: #fff;
	}

	.back svg {
		width: 48px;
		fill: none;
		stroke: #5c6f5a;
		stroke-width: 3;
		stroke-linecap: round;
		stroke-linejoin: round;
	}

	h1,
	h3 {
		font: 700 50px/60px 'Saira', 'Open Sans', sans-serif;
	}

	main {
		padding: 63px 63px 75px;
	}

	.section-title {
		display: flex;
		align-items: center;
		gap: 26px;
		padding: 5px 11px 39px 14px;
	}

	.section-title svg {
		fill: none;
		stroke: #104e27;
		stroke-width: 4;
		stroke-linecap: round;
	}

	h2 {
		flex: 1;
		color: #5c6f5a;
		font: 600 36px/42px 'Saira', 'Open Sans', sans-serif;
		letter-spacing: 3px;
	}

	.hint {
		color: #90a58f;
		font-size: 31px;
		font-weight: 600;
		letter-spacing: 1px;
	}

	.card {
		overflow: clip;
		border: 3px solid #e7eee9;
		border-radius: 42px;
		background: #fff;
		box-shadow: 0 24px 72px rgb(16 78 39 / 10%);
	}

	.place {
		display: flex;
		align-items: center;
		gap: 36px;
		padding: 39px 39px 33px 48px;
	}

	.place h3 {
		flex: 1;
		font-size: 51px;
		font-weight: 800;
	}

	.pin {
		width: 40px;
		fill: none;
		stroke: #2c8c3a;
		stroke-width: 5;
	}

	.locate {
		width: 114px;
		height: 114px;
		border-radius: 32px;
		background: #e8f3e1;
	}

	.locate svg {
		width: 56px;
		fill: none;
		stroke: #2c8c3a;
		stroke-width: 5;
	}

	.locate .core {
		fill: #111;
		stroke: none;
	}

	.map {
		position: relative;
		overflow: hidden;
		border-radius: 42px;
	}

	.canvas {
		width: 100%;
	}

	.city,
	.country {
		font-family: 'Noto Sans', sans-serif;
		stroke: #fff;
		stroke-linejoin: round;
		paint-order: stroke;
	}

	.city {
		fill: #1d2b20;
		font-size: 35px;
		font-weight: 500;
		stroke-width: 7px;
	}

	.country {
		fill: #6b7a6c;
		font-size: 45px;
		font-weight: 500;
		letter-spacing: 4px;
		stroke-opacity: 0.6;
		stroke-width: 6px;
	}

	.layers {
		position: absolute;
		top: 36px;
		left: 36px;
		display: flex;
		padding: 9px;
		border-radius: 48px;
		background: rgb(255 255 255 / 95%);
		box-shadow: 0 12px 48px rgb(0 0 0 / 22%);
	}

	.layers button {
		padding: 0 33px;
		border-radius: 39px;
		background: none;
		color: #5c6f5a;
		font-size: 36px;
		font-weight: 600;
		line-height: 78px;
	}

	.layers .on {
		background: #104e27;
		color: #fff;
	}

	.offset {
		position: absolute;
		top: 162px;
		right: 36px;
		padding: 0 27px;
		border-radius: 30px;
		background: rgb(17 17 17 / 60%);
		color: #fff;
		font-size: 33px;
		font-weight: 600;
		line-height: 66px;
	}

	.zoom {
		position: absolute;
		top: 480px;
		right: 33px;
		width: 114px;
		border-radius: 33px;
		background: #fff;
		box-shadow: 0 12px 48px rgb(0 0 0 / 20%);
	}

	.zoom button {
		width: 100%;
		height: 114px;
		background: none;
	}

	.zoom button + button {
		border-top: 3px solid #e7eee9;
	}

	.zoom svg {
		width: 28px;
		stroke: #111;
		stroke-width: 4;
	}

	.pause {
		position: absolute;
		bottom: 30px;
		left: 30px;
		width: 126px;
		height: 126px;
		border-radius: 50%;
		background: linear-gradient(150deg, #104e27, #2a8c3b);
		box-shadow: 0 12px 48px rgb(0 0 0 / 35%);
	}

	.pause svg {
		width: 34px;
		fill: #fff;
	}

	.info {
		position: absolute;
		right: 30px;
		bottom: 30px;
		width: 72px;
		height: 72px;
		border-radius: 50%;
		background: #fff;
	}

	.info svg {
		width: 44px;
	}

	.reading {
		display: flex;
		justify-content: space-between;
		padding: 24px 6px 15px 42px;
		border-top: 3px solid #e7eee9;
		border-bottom: 3px solid #e7eee9;
	}

	.moment {
		display: flex;
		flex-direction: column;
		color: #90a58f;
		font-size: 32px;
		font-weight: 500;
		line-height: 34px;
	}

	.moment strong {
		color: #111;
		font: 700 39px/48px 'Saira', 'Open Sans', sans-serif;
	}

	.values {
		display: flex;
		flex-direction: column;
		align-items: flex-end;
		gap: 21px;
	}

	.amount {
		display: flex;
		align-items: baseline;
		gap: 15px;
		padding-right: 36px;
		color: #90a58f;
		font-size: 31px;
		font-weight: 500;
	}

	.amount strong {
		color: #111;
		font: 900 57px/78px 'Saira', Lato, sans-serif;
	}

	.pills {
		display: flex;
		gap: 15px;
	}

	.pill {
		display: flex;
		align-items: center;
		gap: 18px;
		border-radius: 32px;
		font: 700 28px/63px 'Saira', Lato, sans-serif;
	}

	.level {
		margin-left: 14px;
		padding: 0 27px;
		background: #f8efe1;
		color: #d4a14a;
		font: 700 28px/54px Outfit, Lato, sans-serif;
		letter-spacing: 1px;
	}

	.trend {
		padding: 0 26px 0 31px;
		background: #f9e2d8;
		color: #f0986a;
	}

	.trend svg {
		width: 18px;
		fill: none;
		stroke: currentColor;
		stroke-width: 3;
	}

	.sure {
		padding: 0 25px;
		background: #e5f2dc;
		color: #67bb32;
	}

	.chart {
		position: relative;
	}

	.chart svg {
		width: 100%;
	}

	.unit {
		position: absolute;
		top: 4px;
		left: 6px;
		color: #90a58f;
		font-size: 26px;
		line-height: 36px;
	}

	.cursor {
		position: absolute;
		top: 0;
		bottom: 0;
		left: 46%;
		display: grid;
		place-content: center;
		width: 6px;
		background: linear-gradient(#104e27 30%, rgb(16 78 39 / 25%));
	}

	.cursor i {
		width: 36px;
		height: 36px;
		border: 7px solid #fff;
		border-radius: 50%;
		background: #104e27;
		box-shadow: 0 0 0 9px rgb(16 78 39 / 17%), 0 6px 24px rgb(0 0 0 / 20%);
	}

	.axis {
		display: grid;
		grid-template-columns: 227fr 274fr 274fr 274fr 139fr;
		padding-top: 18px;
		color: #90a58f;
		font-size: 28px;
		font-weight: 600;
		line-height: 36px;
		text-align: center;
	}

	.axis span:first-child {
		padding-right: 48px;
	}

	.axis span:last-child {
		text-align: right;
	}

	.legend {
		display: flex;
		align-items: center;
		gap: 21px;
		padding: 50px 6px 0;
		color: #90a58f;
		font-size: 28px;
		line-height: 36px;
	}

	.scale {
		flex: 1;
		height: 18px;
		border-radius: 9px;
		background: linear-gradient(90deg, #c5e2f8, #8dbce0 27%, #e2bb7f 57%, #e89f9a 81%, #cc6e6a);
	}

	.forecast {
		display: flex;
		align-items: center;
		gap: 24px;
		padding: 22px 6px 0;
		font-size: 36px;
		line-height: 48px;
	}

	.forecast svg {
		width: 36px;
		fill: none;
		stroke: #67bb32;
		stroke-width: 4;
		stroke-linecap: round;
	}

	.tip,
	.source {
		color: #90a58f;
		text-align: center;
	}

	.card .tip {
		margin-top: 7px;
		font-size: 31px;
		font-style: italic;
		line-height: 42px;
	}

	.card .source {
		margin-top: 22px;
		font-size: 28px;
		line-height: 36px;
	}

	nav {
		position: relative;
		display: grid;
		flex: 1;
		grid-template-columns: 276fr 276fr 192fr 276fr 276fr;
		align-items: start;
		padding: 30px 12px 107px;
		border-top: 3px solid #e7eee9;
		background: #fff;
	}

	.tab {
		display: flex;
		flex-direction: column;
		align-items: center;
		gap: 10px;
		color: #90a58f;
		font-size: 31px;
		font-weight: 600;
		line-height: 36px;
		text-decoration: none;
	}

	.tab:nth-child(4) {
		grid-column: 4;
	}

	.tab.active {
		color: #104e27;
	}

	.tab svg {
		width: 66px;
		height: 66px;
		fill: none;
		stroke: currentColor;
		stroke-width: 2;
		stroke-linejoin: round;
		stroke-linecap: round;
	}

	.fab {
		position: absolute;
		top: -54px;
		left: 50%;
		width: 168px;
		height: 168px;
		border: 9px solid #f5f7f2;
		border-radius: 50%;
		background: linear-gradient(135deg, #68b832, #104e27) border-box;
		background-clip: padding-box;
		box-shadow: 0 18px 60px rgb(103 187 50 / 20%), 0 6px 24px rgb(80 110 30 / 25%);
		transform: translateX(-50%);
	}

	.fab svg {
		width: 58px;
		fill: none;
		stroke: #104e27;
		stroke-width: 9;
		stroke-linecap: round;
	}
</style>
